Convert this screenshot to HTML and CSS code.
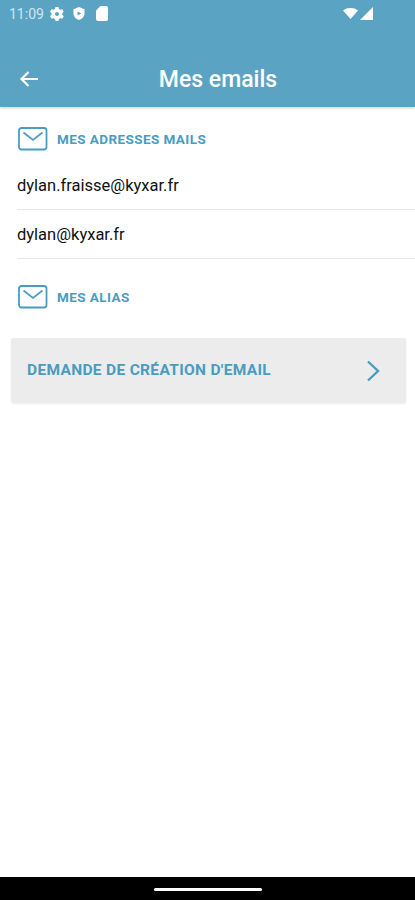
FILE: index.html
```html
<!DOCTYPE html>
<html lang="fr">
<head>
    <meta charset="UTF-8">
    <meta name="viewport" content="width=device-width, initial-scale=1.0">
    <title>Mes emails</title>
    <link rel="stylesheet" href="styles.css">
</head>
<body>
    <div class="app">
        <header class="top-bar">
            <div class="status-bar">
                <span class="clock">11:09</span>
                <svg class="status-icon gear" width="14" height="14" viewBox="0 0 24 24" fill="currentColor">
                    <path fill-rule="evenodd" d="M9.500 0h5l.8 3.600 2.300 1.300 3.500-1.100 2.500 4.400-2.700 2.500v2.600l2.700 2.500-2.500 4.400-3.500-1.100-2.300 1.300-.8 3.600h-5l-.8-3.600-2.300-1.300-3.500 1.100L-.1 15.800l2.700-2.500v-2.600L-.1 8.200l2.500-4.400 3.500 1.100 2.300-1.300zM12 8.500a3.500 3.500 0 1 0 0 7 3.500 3.500 0 0 0 0-7z"/>
                </svg>
                <svg class="status-icon shield" width="14" height="15" viewBox="0 0 24 24" fill="currentColor">
                    <path fill-rule="evenodd" d="M12 1L2.500 4.500v7c0 5.600 4 10 9.500 11.500 5.500-1.500 9.500-5.900 9.500-11.500v-7zM9.500 8.500l6.500 3.500-6.500 3.500z"/>
                </svg>
                <svg class="status-icon sim" width="12" height="15" viewBox="0 0 12 15" fill="currentColor">
                    <path d="M4.500 0H10a2 2 0 0 1 2 2v11a2 2 0 0 1-2 2H2a2 2 0 0 1-2-2V4.500z"/>
                </svg>
                <span class="status-right">
                    <svg width="15" height="11" viewBox="0 0 15 11" fill="currentColor">
                        <path d="M0 2.500C2 .8 4.600 0 7.500 0S13 .8 15 2.500L7.500 11z"/>
                    </svg>
                    <svg width="13" height="13" viewBox="0 0 13 13" fill="currentColor">
                        <path d="M13 0v13H0z"/>
                    </svg>
                </span>
            </div>
            <div class="title-row">
                <svg class="back-icon" width="20" height="18" viewBox="0 0 20 18" fill="none" stroke="currentColor" stroke-width="2.200">
                    <path d="M19 9H2.500M9.500 2L2.500 9l7 7"/>
                </svg>
                <h1>Mes emails</h1>
            </div>
        </header>

        <main class="content">
            <div class="section-title">
                <svg class="mail-icon" width="30" height="24" viewBox="0 0 30 24" fill="none" stroke="currentColor">
                    <rect x="1" y="1" width="27.500" height="21.500" rx="2.500" stroke-width="1.800"/>
                    <path d="M5.500 5.500l9.500 7.500 9.500-7.500" stroke-width="1.700"/>
                </svg>
                <span>MES ADRESSES MAILS</span>
            </div>
            <div class="email-row">dylan.fraisse@kyxar.fr</div>
            <div class="email-row">dylan@kyxar.fr</div>
            <div class="section-title alias">
                <svg class="mail-icon" width="30" height="24" viewBox="0 0 30 24" fill="none" stroke="currentColor">
                    <rect x="1" y="1" width="27.500" height="21.500" rx="2.500" stroke-width="1.800"/>
                    <path d="M5.500 5.500l9.500 7.500 9.500-7.500" stroke-width="1.700"/>
                </svg>
                <span>MES ALIAS</span>
            </div>
            <div class="request-btn">
                <span class="request-label">DEMANDE DE CRÉATION D'EMAIL</span>
                <svg width="14" height="22" viewBox="0 0 14 22" fill="none" stroke="currentColor" stroke-width="2.400">
                    <path d="M2 1.500L12 11 2 20.500"/>
                </svg>
            </div>
        </main>

        <footer class="nav-bar">
            <div class="home-pill"></div>
        </footer>
    </div>
</body>
</html>
```

FILE: styles.css
```css
:root {
    --header-color: #5ba3c2;
    --accent-color: #4a9cbf;
    --line-color: #e8e8e8;
}

html, body {
    margin: 0;
    padding: 0;
}

body {
    font-family: Roboto, 'Liberation Sans', sans-serif;
    background-color: white;
    color: #111111;
}

.app {
    display: flex;
    flex-direction: column;
    width: 415px;
    height: 900px;
    overflow: hidden;
}

.top-bar {
    height: 107px;
    flex-shrink: 0;
    background-color: var(--header-color);
    color: white;
    box-shadow: 0 1px 3px rgba(0, 0, 0, 0.2);
    position: relative;
}

.status-bar {
    display: flex;
    align-items: center;
    height: 27px;
    padding: 0 42px 0 9px;
}

.clock {
    font-size: 14px;
    color: #d3e6ef;
    margin-right: 6px;
}

.status-icon {
    margin-right: 9px;
}

.gear {
    margin-right: 8px;
}

.shield {
    margin-right: 10px;
}

.status-right {
    display: flex;
    align-items: center;
    gap: 2px;
    margin-left: auto;
}

.title-row {
    display: flex;
    align-items: center;
    justify-content: center;
    height: 50px;
    margin-top: 27px;
    padding-left: 21px;
    position: relative;
}

.title-row h1 {
    margin: 0;
    font-size: 23px;
    font-weight: 500;
}

.back-icon {
    position: absolute;
    left: 19px;
    top: 16px;
}

.content {
    flex: 1;
    padding: 0 0 0 17px;
}

.section-title {
    display: flex;
    align-items: center;
    gap: 9px;
    box-sizing: border-box;
    height: 62px;
    margin-bottom: -8px;
    padding: 1px 0 0 1px;
    color: var(--accent-color);
    font-size: 13.500px;
    font-weight: 700;
    letter-spacing: 0.42px;
}

.email-row {
    height: 48px;
    line-height: 49px;
    font-size: 16.500px;
    border-bottom: 1px solid var(--line-color);
}

.section-title.alias {
    height: 74px;
    margin-bottom: 0;
}

.request-btn {
    display: flex;
    align-items: center;
    justify-content: space-between;
    height: 65px;
    margin: 5px 9px 0 -6px;
    padding: 0 26px 0 16px;
    background-color: #ececec;
    border-radius: 2px;
    box-shadow: 0 1px 2px rgba(0, 0, 0, 0.08);
    color: var(--accent-color);
    font-size: 15.500px;
    font-weight: 700;
    letter-spacing: 0.32px;
}

.request-label {
    padding-bottom: 2px;
}

.nav-bar {
    display: flex;
    align-items: center;
    justify-content: center;
    height: 23px;
    flex-shrink: 0;
    background-color: black;
}

.home-pill {
    width: 108px;
    height: 3px;
    margin-top: 1px;
    border-radius: 2px;
    background-color: white;
}
```
